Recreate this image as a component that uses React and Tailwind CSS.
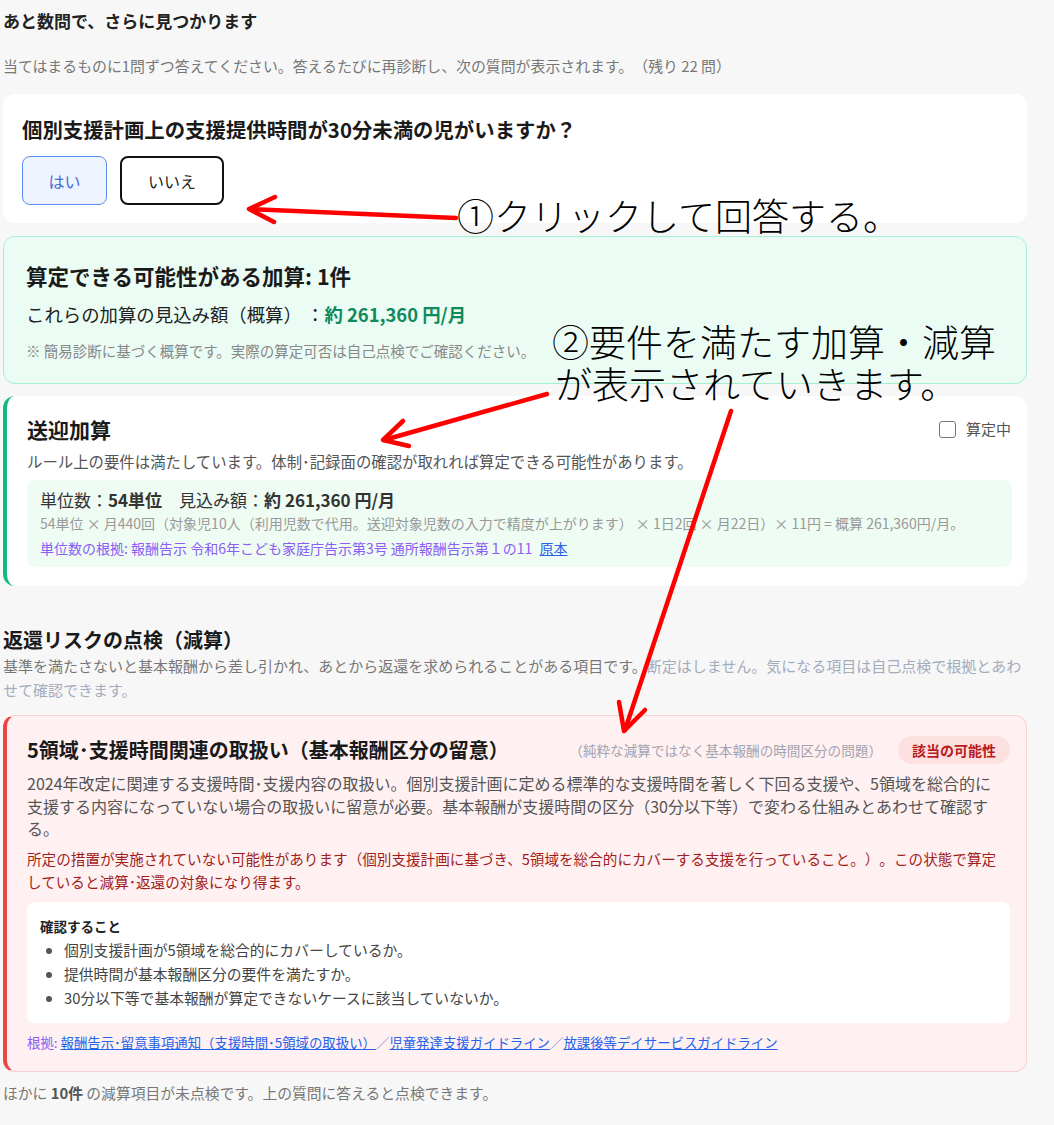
import React from 'react';

const font = "font-['Noto_Sans_CJK_JP','Noto_Sans',sans-serif]";

// red hand-drawn style arrows laid over the screenshot
const Annotations = () => {
  return (
    <div className="pointer-events-none absolute inset-0">
      <svg className="absolute left-0 top-0" width="1054" height="1125" viewBox="0 0 1054 1125" fill="none">
        <g stroke="#ff0000" strokeWidth="4.5" strokeLinecap="round" strokeLinejoin="round">
          <line x1="456" y1="218" x2="250" y2="209" />
          <polyline points="275,197 249,209 274,222" />
          <line x1="547" y1="394" x2="384" y2="440" />
          <polyline points="403,421 383,440 409,446" />
          <line x1="731" y1="411" x2="625" y2="730" />
          <polyline points="619,702 624,731 645,710" />
        </g>
      </svg>
      <div className={`absolute left-[457px] top-[193px] text-[37px] leading-[44px] font-light text-black ${font}`}>
        ①クリックして回答する。
      </div>
      <div className={`absolute left-[552px] top-[320px] text-[37px] leading-[42px] font-light text-black ${font}`}>
        <div>②要件を満たす加算・減算</div>
        <div className="pl-[3px]">が表示されていきます。</div>
      </div>
    </div>
  );
};

const App = () => {
  return (
    <div className={`relative min-h-screen bg-[#f7f7f7] [text-spacing-trim:space-all] ${font}`}>
      <div className="ml-[3px] w-[1024px] pt-[8px] pb-[20px]">
        {/* Header */}
        <h2 className="text-[17px] leading-[26px] font-bold text-[#222]">あと数問で、さらに見つかります</h2>
        <p className="mt-[21px] text-[14.9px] leading-[22px] text-[#777]">
          当てはまるものに1問ずつ答えてください。答えるたびに再診断し、次の質問が表示されます。（残り 22 問）
        </p>

        {/* Question */}
        <div className="mt-[17px] bg-white rounded-xl px-[19px] pt-[21px] pb-[18px]">
          <h3 className="text-[20.4px] leading-[28px] font-bold text-[#1a1a1a]">
            個別支援計画上の支援提供時間が30分未満の児がいますか？
          </h3>
          <div className="mt-[13px] flex gap-[13px]">
            <button className="w-[85px] h-[49px] rounded-lg border-[1.5px] border-[#5b8def] bg-[#eef4ff] text-[16px] text-[#4a6ad8]">
              はい
            </button>
            <button className="w-[104px] h-[49px] rounded-lg border-2 border-[#111] bg-white text-[16px] text-[#222]">
              いいえ
            </button>
          </div>
        </div>

        {/* Summary */}
        <div className="mt-[13px] rounded-xl border border-[#a7f0cf] bg-[#ebfcf4] px-[22px] pt-[24px] pb-[21px]">
          <h3 className="text-[21.5px] leading-[30px] font-bold text-[#1a1a1a]">算定できる可能性がある加算: 1件</h3>
          <p className="mt-[9px] text-[18.4px] leading-[28px] text-[#222]">
            これらの加算の見込み額（概算） ：<span className="font-bold text-[#0e8a5c]">約 261,360 円/月</span>
          </p>
          <p className="mt-[12px] text-[14.5px] leading-[22px] text-[#888]">
            ※ 簡易診断に基づく概算です。実際の算定可否は自己点検でご確認ください。
          </p>
        </div>

        {/* 送迎加算 */}
        <div className="mt-[12px] rounded-xl border-l-4 border-[#10b981] bg-white pl-[20px] pr-[15px] pt-[19px] pb-[19px]">
          <div className="flex items-center justify-between">
            <h4 className="text-[21px] leading-[28px] font-bold text-[#1a1a1a]">送迎加算</h4>
            <label className="mr-[1px] flex items-center gap-[10px] text-[15px] text-[#555]">
              <span className="h-[17px] w-[17px] rounded-[3px] border-[1.5px] border-[#777] bg-white" />
              算定中
            </label>
          </div>
          <p className="mt-[7px] text-[15.4px] leading-[22px] text-[#555]">
            ルール上の要件は満たしています。体制･記録面の確認が取れれば算定できる可能性があります。
          </p>
          <div className="mt-[8px] rounded-lg bg-[#effcf3] px-[13px] pt-[8px] pb-[8px]">
            <p className="text-[17px] leading-[24px] text-[#333]">
              単位数：<span className="font-bold">54単位</span>　見込み額：<span className="font-bold">約 261,360 円/月</span>
            </p>
            <p className="text-[14px] leading-[22px] text-[#999]">
              54単位 × 月440回（対象児10人（利用児数で代用。送迎対象児数の入力で精度が上がります） × 1日2回 × 月22日）× 11円 = 概算 261,360円/月。
            </p>
            <p className="mt-[3px] text-[14px] leading-[22px] text-[#8b5cf6]">
              単位数の根拠: 報酬告示 令和6年こども家庭庁告示第3号 通所報酬告示第１の11{' '}
              <a href="#" className="ml-[4px] text-[#2563eb] underline">原本</a>
            </p>
          </div>
        </div>

        {/* 減算 section */}
        <h3 className="mt-[40px] text-[20px] leading-[28px] font-bold text-[#1a1a1a]">返還リスクの点検（減算）</h3>
        <p className="text-[15px] leading-[24px] text-[#777]">
          基準を満たさないと基本報酬から差し引かれ、あとから返還を求められることがある項目です。
          <span className="text-[#a3acbd]">断定はしません。気になる項目は自己点検で根拠とあわせて確認できます。</span>
        </p>

        <div className="mt-[13px] rounded-xl border border-[#fbd0d0] border-l-4 border-l-[#ef4444] bg-[#fff1f1] pl-[20px] pr-[22px] pt-[20px] pb-[19px]">
          <div className="flex items-center">
            <h4 className="text-[20px] leading-[28px] font-bold text-[#1a1a1a]">
              5領域･支援時間関連の取扱い（基本報酬区分の留意）
            </h4>
            <span className="ml-auto text-[13.6px] text-[#a3a3b0]">（純粋な減算ではなく基本報酬の時間区分の問題）</span>
            <span className="ml-[16px] -mr-[6px] rounded-full bg-[#fde0e0] px-[14px] py-[3px] text-[14px] leading-[22px] font-bold text-[#b91c1c]">
              該当の可能性
            </span>
          </div>
          <p className="mt-[8px] text-[16px] leading-[22.5px] text-[#555]">
            2024年改定に関連する支援時間･支援内容の取扱い。個別支援計画に定める標準的な支援時間を著しく下回る支援や、5領域を総合的に支援する内容になっていない場合の取扱いに留意が必要。基本報酬が支援時間の区分（30分以下等）で変わる仕組みとあわせて確認する。
          </p>
          <p className="mt-[7px] text-[14.6px] leading-[23px] text-[#a11d1d]">
            所定の措置が実施されていない可能性があります（個別支援計画に基づき、5領域を総合的にカバーする支援を行っていること。）。この状態で算定していると減算･返還の対象になり得ます。
          </p>
          <div className="mt-[9px] -mr-[6px] rounded-lg bg-white px-[13px] pt-[13px] pb-[13px]">
            <p className="mb-[1px] text-[13.5px] leading-[22px] font-bold text-[#222]">確認すること</p>
            <ul className="ml-[24px] list-disc text-[14.8px] leading-[24px] text-[#444] marker:text-[#555]">
              <li>個別支援計画が5領域を総合的にカバーしているか。</li>
              <li>提供時間が基本報酬区分の要件を満たすか。</li>
              <li>30分以下等で基本報酬が算定できないケースに該当していないか。</li>
            </ul>
          </div>
          <p className="mt-[9px] text-[13.4px] leading-[20px] text-[#8b5cf6]">
            根拠:{' '}
            <a href="#" className="text-[#2563eb] underline">報酬告示･留意事項通知（支援時間･5領域の取扱い）</a>
            <span className="text-[#8b9ad8]">／</span>
            <a href="#" className="text-[#2563eb] underline">児童発達支援ガイドライン</a>
            <span className="text-[#8b9ad8]">／</span>
            <a href="#" className="text-[#2563eb] underline">放課後等デイサービスガイドライン</a>
          </p>
        </div>

        <p className="mt-[10px] text-[14.8px] leading-[22px] text-[#777]">
          ほかに <span className="font-bold text-[#555]">10件</span> の減算項目が未点検です。上の質問に答えると点検できます。
        </p>
      </div>

      <Annotations />
    </div>
  );
};

export default App;
